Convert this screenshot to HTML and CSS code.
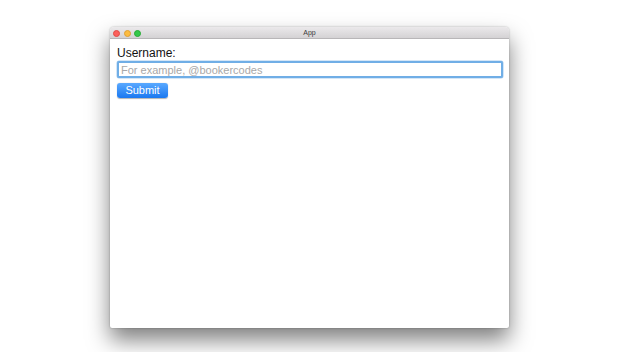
FILE: index.html
```html
<!DOCTYPE html>
<html lang="en">
<head>
  <meta charset="UTF-8">
  <title>App</title>
  <link rel="stylesheet" href="styles.css">
</head>
<body>
  <div class="window">
    <div class="titlebar">
      <div class="lights">
        <span class="light red"></span>
        <span class="light yellow"></span>
        <span class="light green"></span>
      </div>
      <div class="title">App</div>
    </div>
    <form class="content">
      <label class="label" for="username">Username:</label>
      <input class="field" id="username" type="text" placeholder="For example, @bookercodes">
      <button class="submit" type="button">Submit</button>
    </form>
  </div>
</body>
</html>
```

FILE: styles.css
```css
* { box-sizing: border-box; }
html, body { height: 100%; }
body {
  margin: 0;
  padding: 27px 0 0 110px;
  background: #ffffff;
  font-family: 'Liberation Sans', Arial, sans-serif;
}
.window {
  width: 399px;
  height: 301px;
  background: #ffffff;
  border-radius: 4px 4px 2px 2px;
  box-shadow: 0 12px 22px rgba(0, 0, 0, 0.5), 0 0 2px rgba(0, 0, 0, 0.3);
  display: flex;
  flex-direction: column;
  overflow: hidden;
}
.titlebar {
  height: 12px;
  position: relative;
  background: linear-gradient(to bottom, #ebe9eb, #d4d2d4);
  border-bottom: 1px solid #b8b6b8;
  display: flex;
  align-items: center;
  justify-content: center;
}
.lights {
  position: absolute;
  left: 3px;
  top: 2.5px;
  display: flex;
  gap: 3.5px;
}
.light {
  width: 7px;
  height: 7px;
  border-radius: 50%;
}
.red { background: #fc605c; border: 0.5px solid #de4a45; }
.yellow { background: #fdbc40; border: 0.5px solid #de9f34; }
.green { background: #34c84a; border: 0.5px solid #27aa35; }
.title {
  font-size: 7px;
  color: #3a3a3a;
  line-height: 11px;
}
.content {
  margin: 0;
  padding: 7px 7px 0 7px;
  display: flex;
  flex-direction: column;
  align-items: flex-start;
}
.label {
  font-size: 12px;
  color: #111;
  line-height: 14px;
}
.field {
  margin-top: 1px;
  width: 386px;
  height: 17px;
  border: 2px solid #70aee6;
  border-radius: 2px;
  padding: 0 2px;
  font-family: inherit;
  font-size: 11px;
  color: #333;
  outline: none;
  box-shadow: 0 0 0 0.5px #a9cdef;
}
.field::placeholder { color: #a8a8a8; }
.submit {
  margin-top: 5px;
  width: 51px;
  height: 15px;
  border: none;
  border-radius: 3px;
  padding: 0;
  background: linear-gradient(to bottom, #5aa9ff, #1a78f0);
  color: #ffffff;
  font-family: inherit;
  font-size: 11px;
  line-height: 15px;
  box-shadow: 0 0.5px 1px rgba(0, 0, 0, 0.3);
}
```
